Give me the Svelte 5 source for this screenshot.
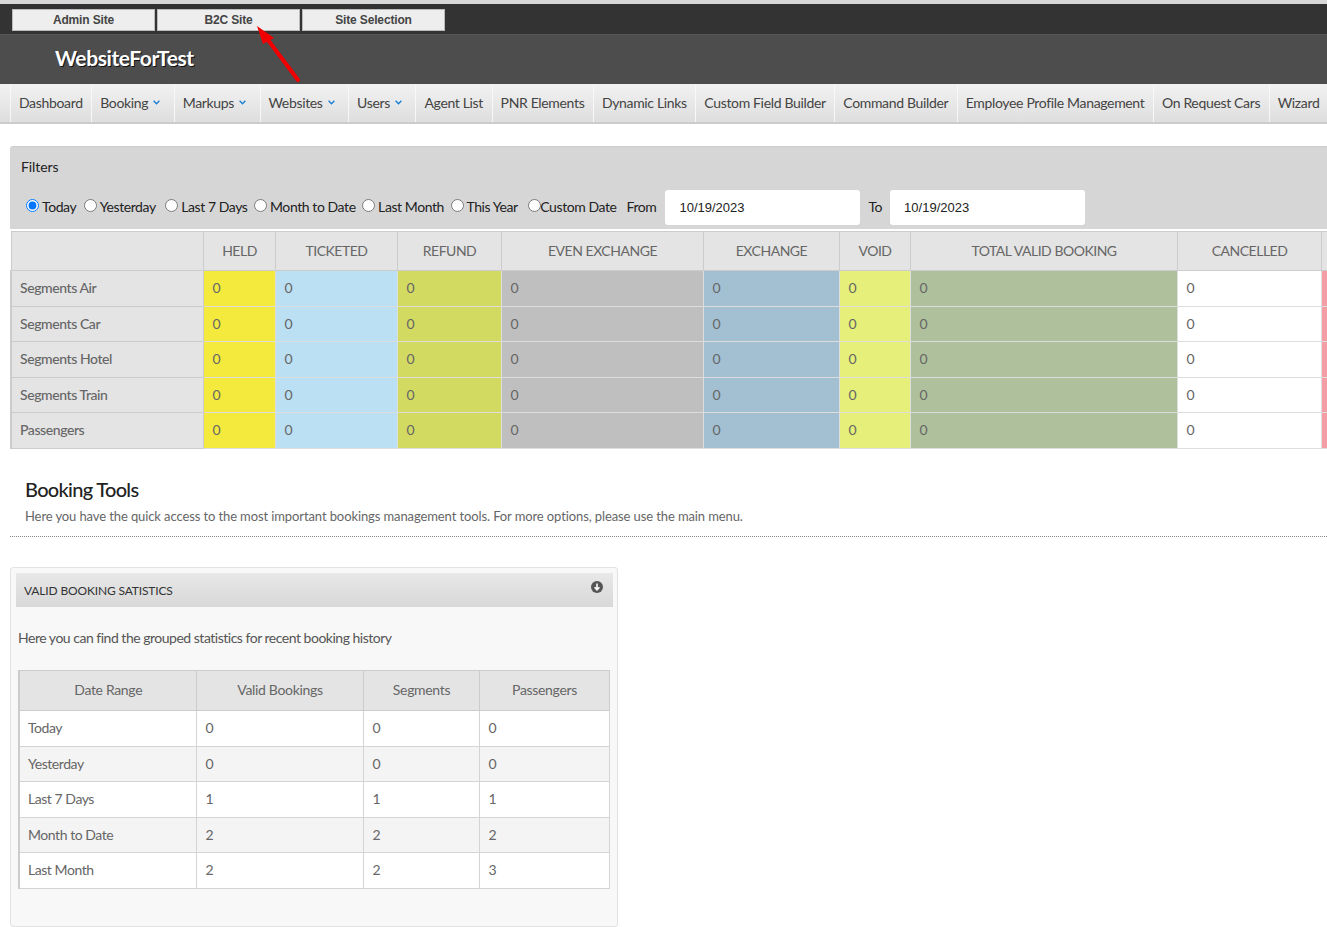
<script>
  const topLinks = ['Admin Site', 'B2C Site', 'Site Selection'];
  const nav = [
    ['Dashboard', false], ['Booking', true], ['Markups', true], ['Websites', true], ['Users', true],
    ['Agent List', false], ['PNR Elements', false], ['Dynamic Links', false], ['Custom Field Builder', false],
    ['Command Builder', false], ['Employee Profile Management', false], ['On Request Cars', false], ['Wizard', false]
  ];
  const ranges = ['Today', 'Yesterday', 'Last 7 Days', 'Month to Date', 'Last Month', 'This Year', 'Custom Date'];
  const cols = [
    ['HELD', 72, '#f4ea3e'], ['TICKETED', 122, '#bbdff3'], ['REFUND', 104, '#d3da62'], ['EVEN EXCHANGE', 202, '#bfbfbf'],
    ['EXCHANGE', 136, '#a3bfd2'], ['VOID', 71, '#e5ef79'], ['TOTAL VALID BOOKING', 267, '#aec19c'], ['CANCELLED', 144, '#ffffff']
  ];
  const rows = [['Segments Air', 36], ['Segments Car', 35], ['Segments Hotel', 36], ['Segments Train', 35], ['Passengers', 36]];
  const stats = [
    ['Today', 0, 0, 0], ['Yesterday', 0, 0, 0], ['Last 7 Days', 1, 1, 1], ['Month to Date', 2, 2, 2], ['Last Month', 2, 2, 3]
  ];
</script>

<div class="page">
  <div class="topbar">
    {#each topLinks as l}<a class="toplink">{l}</a>{/each}
  </div>
  <div class="brand"><span class="logo">WebsiteForTest</span></div>
  <svg class="arrow" width="46" height="58" viewBox="0 0 46 58">
    <path d="M41 54 L11 14" stroke="#f00000" stroke-width="4" stroke-linecap="round" fill="none" />
    <path d="M0 0 L17 12 L6 18 Z" fill="#f00000" />
  </svg>
  <nav class="nav">
    {#each nav as [t, caret]}
      <a class="navitem" class:hascaret={caret}>{t}{#if caret}<svg class="caret" width="7" height="5" viewBox="0 0 7 5"><path d="M.6 .8 3.5 3.7 6.4 .8" fill="none" stroke="#1a7fd0" stroke-width="1.4" /></svg>{/if}</a>
    {/each}
  </nav>

  <section class="filters">
    <div class="ftitle">Filters</div>
    <div class="fline">
      {#each ranges as r, i}
        <label class="radio" class:last={i === ranges.length - 1}><input type="radio" name="range" checked={i === 0} />{r}</label>
      {/each}
      <span class="from">From</span>
      <input class="date" value="10/19/2023" />
      <span class="to">To</span>
      <input class="date" value="10/19/2023" />
    </div>
  </section>

  <div class="tablewrap">
    <table class="summary">
      <colgroup>
        <col style="width:192px" />
        {#each cols as c}<col style="width:{c[1]}px" />{/each}
        <col style="width:20px" />
      </colgroup>
      <thead>
        <tr>
          <th></th>
          {#each cols as c}<th>{c[0]}</th>{/each}
          <th></th>
        </tr>
      </thead>
      <tbody>
        {#each rows as [name, h]}
          <tr style="height:{h}px">
            <td class="rowhead">{name}</td>
            {#each cols as c}<td style="background:{c[2]}">0</td>{/each}
            <td class="pink"></td>
          </tr>
        {/each}
      </tbody>
    </table>
  </div>

  <header class="tools">
    <h2>Booking Tools</h2>
    <p>Here you have the quick access to the most important bookings management tools. For more options, please use the main menu.</p>
  </header>

  <section class="panel">
    <div class="phead">
      <span>VALID BOOKING SATISTICS</span>
      <svg class="picon" width="12" height="12" viewBox="0 0 12 12">
        <circle cx="6" cy="6" r="6" fill="#555" />
        <path d="M6 2.6V8.6M3.6 6.2 6 8.8 8.4 6.2" fill="none" stroke="#fff" stroke-width="1.6" />
      </svg>
    </div>
    <p class="pdesc">Here you can find the grouped statistics for recent booking history</p>
    <table class="stats">
      <colgroup>
        <col style="width:177px" /><col style="width:167px" /><col style="width:116px" /><col style="width:130px" />
      </colgroup>
      <thead>
        <tr><th>Date Range</th><th>Valid Bookings</th><th>Segments</th><th>Passengers</th></tr>
      </thead>
      <tbody>
        {#each stats as s, i}
          <tr class:odd={i % 2 === 1}>
            {#each s as v}<td>{v}</td>{/each}
          </tr>
        {/each}
      </tbody>
    </table>
  </section>
</div>

<style>
  :global(body) { margin: 0; overflow: hidden; background: #fff; }
  .page { position: relative; width: 1327px; height: 927px; overflow: hidden; font-family: Lato, "Open Sans", sans-serif; font-size: 14px; color: #555; }
  .topbar { box-sizing: border-box; height: 35px; border-top: 4px solid #d8d8d8; background: #333; border-bottom: 1px solid #555; padding: 5px 0 0 12px; display: flex; gap: 2px; background-clip: padding-box; }
  .toplink { box-sizing: border-box; width: 143px; height: 22px; background: #eee; border: 1px solid #bbb; font: bold 12px/20px "Liberation Sans", Arial, sans-serif; letter-spacing: -.15px; text-align: center; color: #444; }
  .brand { box-sizing: border-box; height: 49px; background: #4d4d4d; padding-left: 55px; }
  .logo { font-size: 21px; font-weight: 700; line-height: 45px; color: #fff; text-shadow: 1px 1px 0 #111; letter-spacing: -.42px; }
  .arrow { position: absolute; left: 257px; top: 26px; }
  .nav { box-sizing: border-box; height: 40px; padding-left: 10px; display: flex; background: linear-gradient(#f2f2f2, #dedede); border-bottom: 2px solid #ccc; overflow: hidden; }
  .navitem { box-sizing: border-box; display: flex; align-items: center; flex: none; gap: 5px; height: 38px; padding: 0 8.55px 2px 8px; border-left: 1px solid #f8f8f8; color: #444; white-space: nowrap; letter-spacing: -.34px; }
  .navitem.hascaret { padding-right: 13.5px; }
  .caret { margin-top: 1px; }
  .filters { box-sizing: border-box; margin: 22px 0 0 10px; height: 83px; background: #d6d6d6; border-top: 1px solid #ccc; border-radius: 3px 0 0 0; padding: 13px 0 0 11px; color: #222; }
  .ftitle { line-height: 14px; height: 14px; margin-top: 0; color: #222; letter-spacing: -.1px; }
  .fline { display: flex; align-items: center; margin-top: 15px; height: 36px; padding-left: 5px; white-space: nowrap; letter-spacing: -.42px; }
  .radio { display: flex; align-items: center; margin: -2px 7.5px 0 0; color: #222; }
  .radio:nth-child(2) { margin-right: 9.5px; }
  .radio:nth-child(3), .radio:nth-child(4), .radio:nth-child(5) { margin-right: 6.5px; }
  .radio:nth-child(6) { margin-right: 10.5px; }
  .radio input { margin: 0 3px 1px 0; width: 13px; height: 13px; }
  .radio.last input { margin-right: -1px; }
  .radio.last { margin-right: 0; }
  .from { margin: -2px 9px 0 10px; color: #222; }
  .to { margin: -2px 8px 0 8px; }
  .date { box-sizing: border-box; width: 195px; height: 35px; border: 0; border-radius: 3px; background: #fff; padding: 0 14px; font: 13px "Liberation Sans", Arial, sans-serif; color: #222; outline: 0; }
  .tablewrap { margin: 2px 0 0 10px; overflow: hidden; }
  table { border-collapse: collapse; table-layout: fixed; }
  .summary { width: 1311px; }
  .summary th { height: 39px; box-sizing: border-box; background: #e4e4e4; border: 1px solid #ccc; font-weight: 400; text-align: center; color: #666; padding: 0 0 2px 1px; letter-spacing: -.48px; }
  .summary td { border: 1px solid #ddd; padding: 0 8px 2px 9px; color: #666; box-sizing: border-box; }
  .summary td.rowhead { padding-left: 8px; background: #e4e4e4; border: 1px solid #ccc; border-left: 2px solid #ccc; font-weight: 500; color: #666; letter-spacing: -.42px; }
  .summary td.pink { background: #f39ea5; }
  .tools { margin: 27px 0 0 10px; padding: 0 0 12px 15px; border-bottom: 1px dotted #888; }
  .tools h2 { margin: 0; font-size: 20px; line-height: 26px; font-weight: 500; color: #222; letter-spacing: -.7px; }
  .tools p { margin: 6px 0 0; font-size: 13px; line-height: 16px; color: #666; letter-spacing: -.105px; }
  .panel { box-sizing: border-box; width: 608px; height: 360px; margin: 30px 0 0 10px; padding: 5px 4px 5px 5px; background: #f8f8f8; border: 1px solid #e2e2e2; border-radius: 3px; }
  .phead { box-sizing: border-box; height: 34px; display: flex; justify-content: space-between; padding: 0 10px 0 8px; background: linear-gradient(#e8e8e8, #d8d8d8); font-size: 12px; line-height: 35px; color: #333; letter-spacing: -.15px; }
  .picon { margin-top: 8px; }
  .pdesc { margin: 23px 0 0 2px; font-size: 14px; line-height: 16px; color: #555; letter-spacing: -.49px; }
  .stats { width: 590px; margin: 24px 0 0 2px; background: #fff; }
  .stats th { height: 40px; box-sizing: border-box; background: #e4e4e4; border: 1px solid #ccc; font-weight: 400; color: #666; text-align: center; padding: 0 0 2px 1px; letter-spacing: -.33px; }
  .stats td { height: 35.5px; box-sizing: border-box; padding: 0 8px 1.5px 9px; border: 1px solid #d4d4d4; color: #666; letter-spacing: -.45px; }
  .stats td:first-child { padding-left: 8px; }
  .stats tr.odd td { background: #f4f4f4; }
  .stats tr > :first-child { border-left: 2px solid #ccc; }
</style>
